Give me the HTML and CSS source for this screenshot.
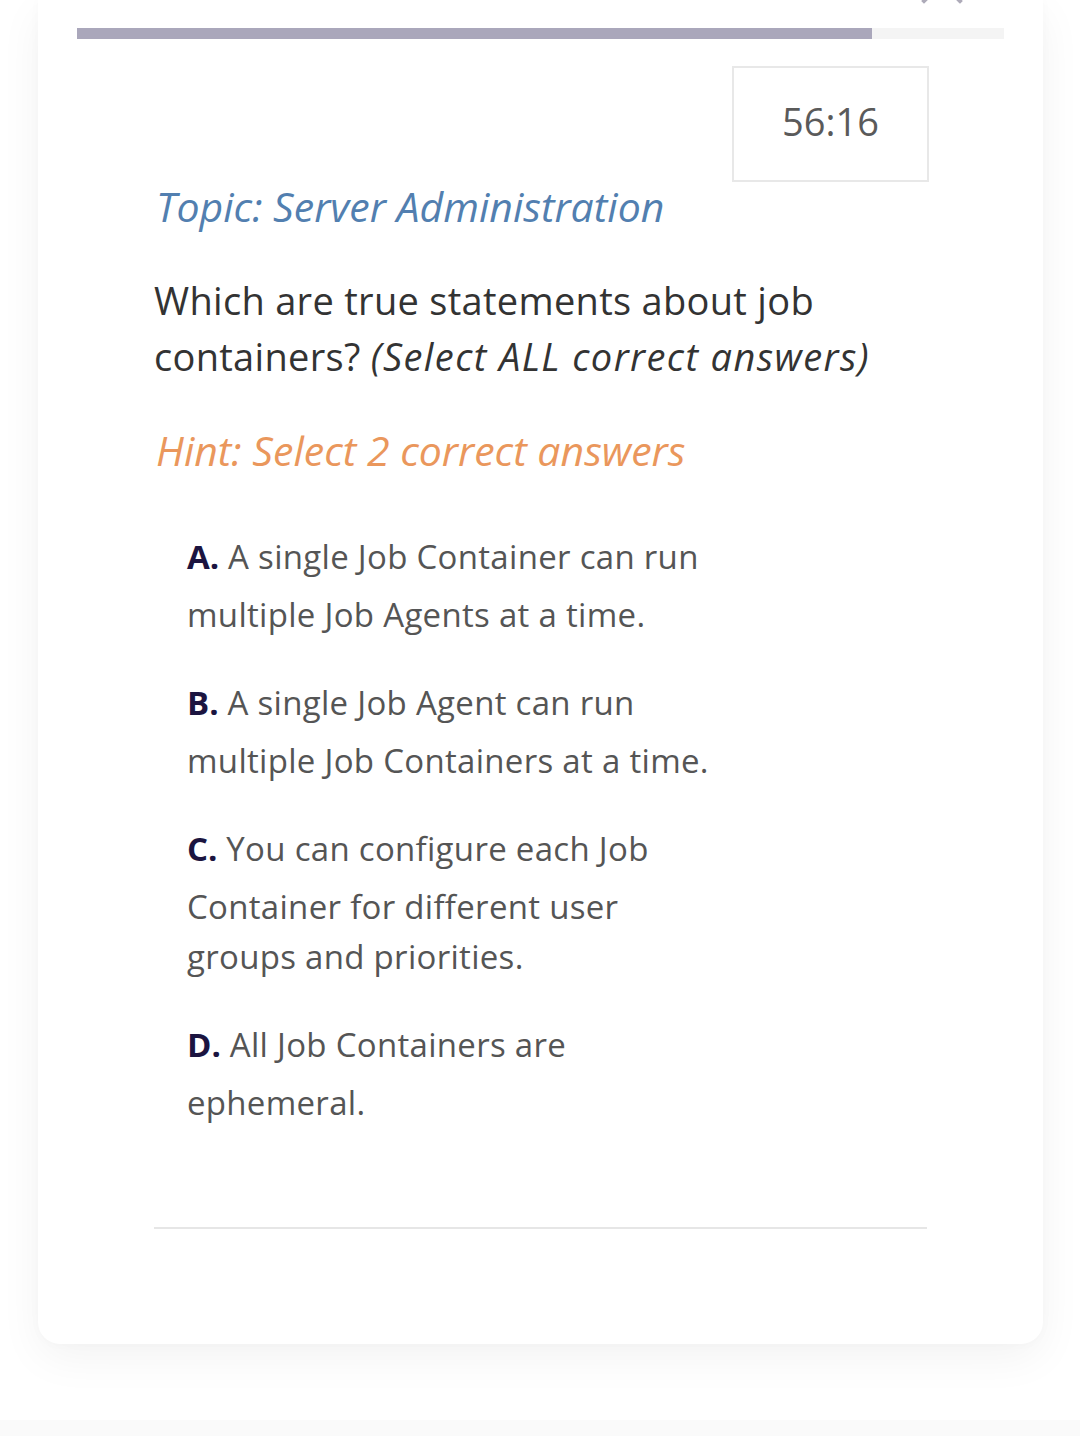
FILE: index.html
```html
<!DOCTYPE html>
<html lang="en">
<head>
<meta charset="utf-8">
<title>Quiz</title>
<link rel="stylesheet" href="styles.css">
</head>
<body>
<div class="page">
  <div class="card">
    <svg class="close" viewBox="0 0 44 44" width="44" height="44" aria-hidden="true">
      <path d="M4 4 L40 40 M40 4 L4 40" stroke="#aeabb9" stroke-width="4" stroke-linecap="square" fill="none"/>
    </svg>
    <div class="progress"><div class="progress-fill" style="width:85.8%"></div></div>
    <div class="content">
      <div class="timer-row"><div class="timer">56:16</div></div>
      <div class="topic">Topic: Server Administration</div>
      <p class="question">Which are true statements about job containers? <em>(Select ALL correct answers)</em></p>
      <div class="hint">Hint: Select 2 correct answers</div>
      <ul class="options">
        <li class="option"><span class="label">A.</span> A single Job Container can run multiple Job Agents at a time.</li>
        <li class="option"><span class="label">B.</span> A single Job Agent can run multiple Job Containers at a time.</li>
        <li class="option"><span class="label">C.</span> You can configure each Job Container for different user groups and priorities.</li>
        <li class="option"><span class="label">D.</span> All Job Containers are ephemeral.</li>
      </ul>
      <div class="divider"></div>
    </div>
  </div>
</div>
</body>
</html>
```
FILE: styles.css
```css
html, body {
  margin: 0;
  padding: 0;
  background: #fafafa;
}
body {
  font-family: "Open Sans", "Noto Sans", sans-serif;
  width: 1080px;
  height: 1436px;
  overflow: hidden;
}
.page {
  background: #ffffff;
  padding: 0 37px 76px 38px;
}
.card {
  position: relative;
  background: #fff;
  border-radius: 0 0 22px 22px;
  box-shadow: 0 14px 44px rgba(0, 0, 0, 0.05), 0 0 12px rgba(0, 0, 0, 0.025);
  padding: 28px 39px 0 39px;
  height: 1316px;
}
.close {
  position: absolute;
  left: 882px;
  top: -39px;
}
.progress {
  height: 11px;
  background: #f4f4f4;
}
.progress-fill {
  height: 100%;
  background: #aaa7bb;
}
.content {
  padding: 0 77px 0 77px;
}
.timer-row {
  display: flex;
  justify-content: flex-end;
  margin-top: 27px;
  margin-right: -2px;
}
.timer {
  width: 193px;
  height: 106px;
  padding-bottom: 6px;
  border: 2px solid #e8e8e8;
  display: flex;
  align-items: center;
  justify-content: center;
  font-size: 38px;
  color: #5a5a5a;
  line-height: 52px;
}
.topic {
  font-style: italic;
  color: #527fb0;
  font-size: 41px;
  line-height: 52px;
  margin-top: -2px;
  padding-left: 2px;
}
.question {
  margin: 40px 0 0 0;
  font-size: 38px;
  line-height: 56px;
  letter-spacing: 0.3px;
  color: #333333;
  max-width: 740px;
}
.question em {
  font-style: italic;
  letter-spacing: 1.4px;
}
.hint {
  font-style: italic;
  color: #ea975c;
  font-size: 41px;
  line-height: 52px;
  margin-top: 40px;
  padding-left: 2px;
}
.options {
  list-style: none;
  margin: 48px 0 0 0;
  padding: 0 0 0 33px;
}
.option {
  font-size: 33px;
  line-height: 50px;
  letter-spacing: 0.3px;
  color: #555555;
  max-width: 530px;
  margin-bottom: 30px;
}
.label {
  font-weight: 700;
  color: #1b1440;
  line-height: 66px;
  letter-spacing: 0;
}
.divider {
  height: 2px;
  background: #e6e6e6;
  margin-top: 99px;
}
```
